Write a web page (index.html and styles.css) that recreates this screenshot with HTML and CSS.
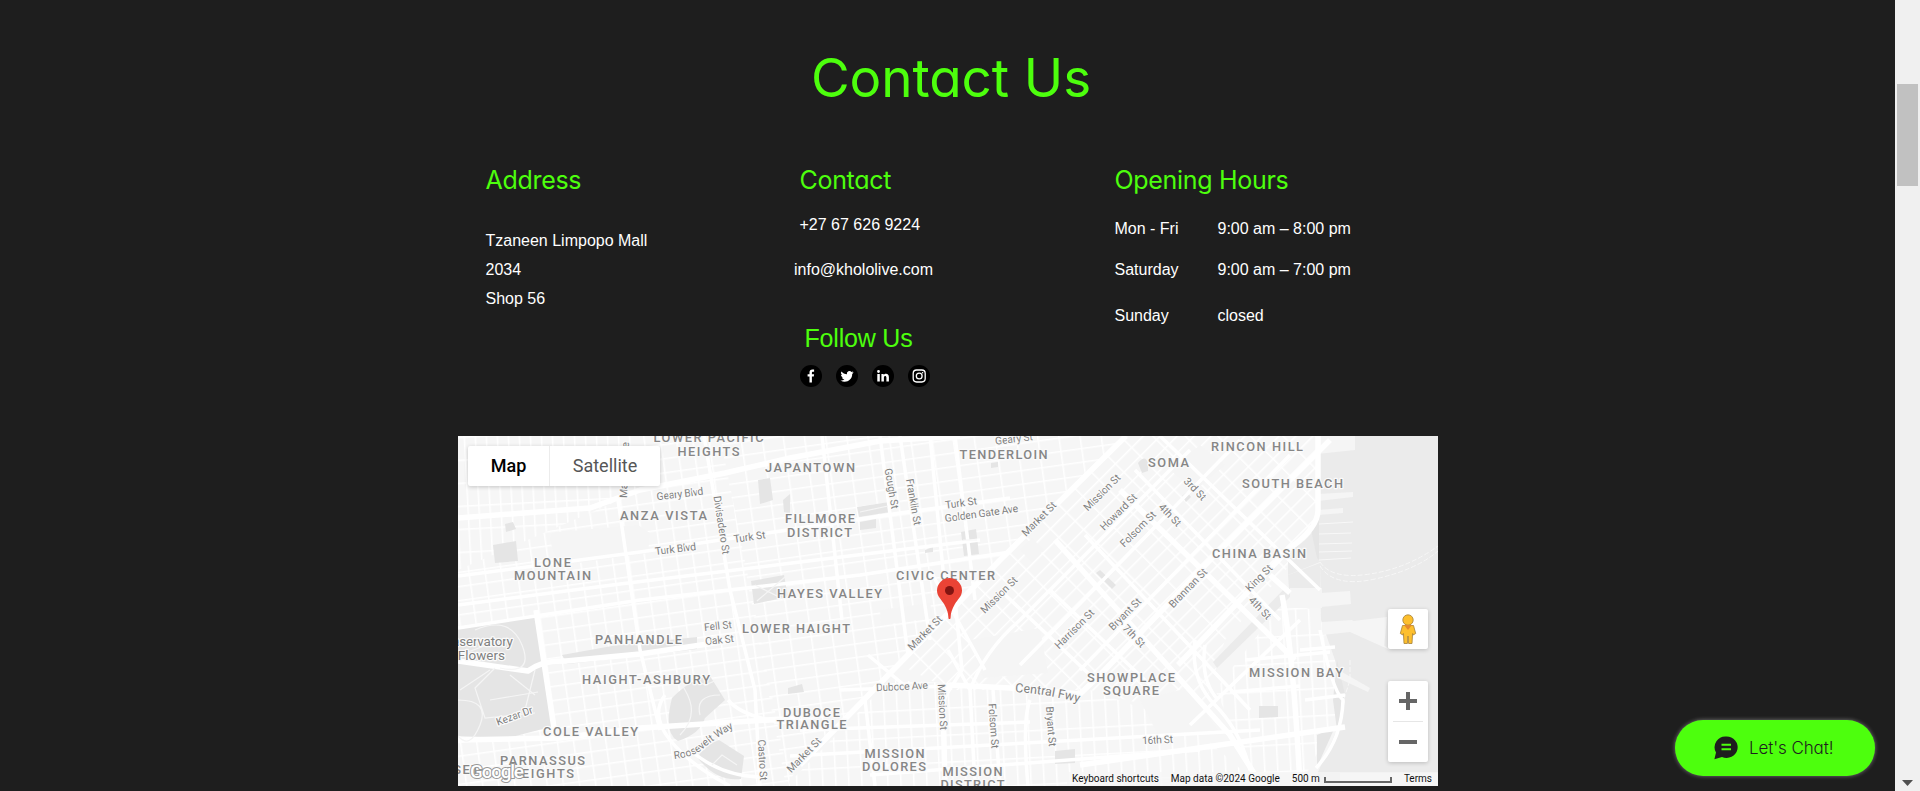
FILE: index.html
```html
<!DOCTYPE html>
<html lang="en">
<head>
<meta charset="utf-8">
<title>Contact Us</title>
<link rel="stylesheet" href="styles.css">
</head>
<body>
<main class="page">
  <h1 class="title">Contact Us</h1>
  <div class="columns">
    <section class="address">
      <h2>Address</h2>
      <p>Tzaneen Limpopo Mall<br>2034<br>Shop 56</p>
    </section>
    <section class="contact">
      <h2>Contact</h2>
      <p class="phone">+27 67 626 9224</p>
      <p class="email">info@khololive.com</p>
      <h3>Follow Us</h3>
      <div class="social">
        <svg viewBox="0 0 22 22"><circle cx="11" cy="11" r="11"/><path fill="#fff" d="M9.500 17.500v-6H7.600V9.200h1.900V7.600c0-2 1-3 2.900-3h1.700v2.200h-1.100c-.9 0-1.100.4-1.100 1.100v1.300h2.200l-.3 2.300h-1.900v6z"/></svg>
        <svg viewBox="0 0 22 22"><circle cx="11" cy="11" r="11"/><path fill="#fff" d="M17.600 7.200c-.5.200-1 .4-1.500.4.6-.3.900-.8 1.100-1.400-.5.300-1.100.5-1.700.7a2.700 2.700 0 0 0-4.600 2.400c-2.200-.1-4.200-1.200-5.500-2.800-.7 1.200-.4 2.800.8 3.600-.4 0-.8-.1-1.200-.3 0 1.300.9 2.400 2.100 2.700-.4.100-.8.100-1.200 0 .3 1.100 1.300 1.800 2.500 1.900-1.100.9-2.500 1.200-3.900 1.100 5.200 3.200 11.800-.2 11.700-6.500.6-.4 1-1 1.400-1.800z"/></svg>
        <svg viewBox="0 0 22 22"><circle cx="11" cy="11" r="11"/><path fill="#fff" d="M5.300 8.900h2.500v7.600H5.300zM6.500 5.100a1.400 1.400 0 1 1 0 2.800 1.400 1.400 0 0 1 0-2.800zM9.400 8.900h2.300v1c1.200-1.900 5.200-1.700 5.200 2v4.600h-2.500v-4c0-2.200-2.500-2-2.500 0v4H9.400z"/></svg>
        <svg viewBox="0 0 22 22"><circle cx="11" cy="11" r="11"/><g fill="none" stroke="#fff" stroke-width="1.300"><rect x="5.200" y="5" width="12" height="12" rx="3.400"/><circle cx="11.200" cy="11" r="2.900"/></g><circle cx="14.600" cy="7.700" r=".8" fill="#fff"/></svg>
      </div>
    </section>
    <section class="hours">
      <h2>Opening Hours</h2>
      <dl>
        <dt>Mon - Fri</dt><dd>9:00 am – 8:00 pm</dd>
        <dt>Saturday</dt><dd>9:00 am – 7:00 pm</dd>
        <dt class="last">Sunday</dt><dd class="last">closed</dd>
      </dl>
    </section>
  </div>

  <div class="map">
    <svg class="canvas" viewBox="458 436 980 350">
      <defs>
        <pattern id="west" width="16" height="14" patternUnits="userSpaceOnUse" patternTransform="rotate(-8)"><path class="grid" d="M0 0H16M0 0V14"/></pattern>
        <pattern id="north" width="11" height="23" patternUnits="userSpaceOnUse" patternTransform="rotate(-3)"><path class="grid" d="M0 0H11M0 0V23"/></pattern>
        <pattern id="mid" width="21" height="13.500" patternUnits="userSpaceOnUse" patternTransform="rotate(-8)"><path class="grid" d="M0 0H21M0 0V14"/></pattern>
        <pattern id="soma" width="23" height="12" patternUnits="userSpaceOnUse" patternTransform="rotate(-45)"><path class="grid" d="M0 0H23M0 0V12"/></pattern>
        <pattern id="mission" width="13" height="27" patternUnits="userSpaceOnUse" patternTransform="rotate(-3)"><path class="grid" d="M0 0H13M0 0V27"/></pattern>
        <path id="roosevelt" d="M674 759Q694 757 704 748T737 726"/>
        <path id="fwy" d="M1015 692Q1050 694 1084 704"/>
      </defs>
      <rect class="land" x="458" y="436" width="980" height="350"/>
      <path fill="url(#north)" d="M458 436H640L620 500 458 570z"/>
      <path fill="url(#west)" d="M458 570L620 500 640 436H720L790 786H458z"/>
      <path fill="url(#mid)" d="M720 436H1126L800 765 786 786z"/>
      <path fill="url(#soma)" d="M1126 436H1320V530L1225 640 1200 720 1090 690H950L900 665z"/>
      <path fill="url(#mission)" d="M786 786L890 680 1090 690 1190 725 1260 786z"/>
      <path fill="url(#mission)" d="M1215 690L1285 600 1325 615 1345 700 1300 786H1260z"/>

      <g class="faint">
        <path d="M550 540q0-8 8-8l80-7 12 8-2 20-90 13zM880 610l50-7 3 15-52 7zM1020 550l12-12 12 12-12 12zM1170 470l30-25 25 20-30 26zM1140 700l48-12 30 42-60 5zM970 640l70-12 8 45-65 5z"/>
      </g>
      <g class="park">
        <path d="M458 628l78-12 18 110-46 12-50-2zM562 655l50-9 85-9v12l-85 10-45 5zM751 581l33-6 4 22-34 7zM857 507l32-5 1 10-31 5zM860 522l16-3v9l-16 2zM961 532l15-3 3 25-15 2zM493 545l23-4 2 20-23 2zM505 524l8-2 3 7-10 3zM758 480l12-2 3 22-13 4zM783 500l7-6v20l-6-2zM991 463l7-1v5l-7 1zM1138 463q7-9 10 0v8l-6 2zM1182 496l5-4 4 5-5 5zM788 688l14-4 2 8-16 2zM1055 751l20-2v14l-20 1zM1259 706h19v11l-19 1zM1418 573h0zM1418 573h0zM1418 573h0zM1418 573h0zM1418 573h0zM1418 573h0zM1418 573h0zM1096 573l4-3 16 15-4 4zM925 550l8-3v5l-8 1z"/>
        <path d="M672 698q20-20 38-22l15 24-20 18q-5 16-27 23-15-8-6-43zM697 757q12-14 22-17l25 16-3 23q-25 3-44-22z"/>
      </g>
      <path class="water" d="M1319 436V515Q1318 535 1288 552V575L1320 562 1321 620 1335 660 1345 702 1336 732 1318 772V786H1438V436z"/>
      <path class="water" d="M1288 575l32-12v30l-31-4zM1213 662l73-75 6 8-75 73z"/>
      <g class="park"><path d="M1310 525l9-10v45l-2-2zM1337 660l8 35-8 35-4-30zM1317 735l18-8-18 40z"/></g>
      <g class="pier">
        <path d="M1318 436h37v14l-38 4zM1318 494l35-2v5l-35 4zM1318 510l25-2v5l-25 2zM1321 593l29-2 1 13-30 3zM1322 622l30-2 38 30-40-18-28 3zM1342 672l28 16-2 4-30-14zM1353 621l34-4-3 30-20-15zM1290 588h32v20h-32zM1340 773h100v13h-100z"/>
        <path class="slips" d="M1319 524l34-2M1319 534l32-1M1319 544l33-1M1319 552l33-1M1319 560l32-2"/>
      </g>
      <path class="ferry" d="M1320 562q12 18 50 12t68-28M1320 566q14 22 55 13t63-28M1350 660v20l-8 25"/>

      <g class="road thick">
        <path d="M458 518L590 508 640 490 725 473 790 458 880 441 960 436"/>
        <path d="M800 765L900 663 1000 560 1126 436"/>
        <path d="M945 786L943 700 950 685 1010 688 1080 694 1100 675 1210 560 1330 440"/>
        <path d="M1055 540L1230 735 1262 786M1318 436V510Q1318 528 1290 548L1178 665M1120 490L1295 660"/>
        <path d="M1282 595Q1293 650 1300 786M1270 575l20 18"/>
        <path d="M536 610L555 735M458 661L528 671Q542 660 566 661L640 654 735 640"/>
        <path d="M458 740L560 738 640 728 800 718M1080 765L1345 727"/>
      </g>
      <g class="road">
        <path d="M458 576L640 552 900 513 1010 498M458 605L620 584 800 562 980 540M618 500L640 650 660 730M704 436L730 590 755 690 760 786M458 628L640 600 860 575 1010 552"/>
        <path d="M822 436L842 620M900 436L930 640M880 436L908 655M930 436L944 580M955 436L975 600"/>
        <path d="M955 600L962 670 943 700M930 570L985 670M948 650L970 690M868 655L910 690M840 690L950 686M975 786L970 690Q985 650 1020 620L1190 450"/>
        <path d="M1050 590L1150 685M1000 590L1090 675M1085 535L1250 710M1135 470L1280 620M1160 436L1320 590M1020 665L1240 440M1080 670L1290 455"/>
        <path d="M865 700L875 786M993 690L1000 786M1030 700Q1022 720 1028 786M790 756L1260 730M800 730L1030 722M870 775L1200 750"/>
        <path d="M1190 725L1300 620M1195 640Q1190 680 1215 705T1250 770M1205 645Q1200 680 1218 700M1245 660L1330 652M1230 692L1300 686M1305 700l40-5M1300 650l35-3M1320 630Q1332 690 1343 700 1342 740 1316 768"/>
        <path d="M665 695Q650 715 670 740T730 786M728 700Q745 720 800 724M690 750Q720 776 760 777"/>
      </g>
      <g class="trail">
        <path d="M458 700Q490 700 480 725T458 736M475 630Q510 615 522 645T500 668M460 690l30-20M495 668l-20 20 10 30 50-5M500 640l-40 15M510 675l25 20M535 670l-10 40M490 700l48-8M680 735q20-20 5-45t20-5l12-5M700 715q-5-20 20-20M712 765l10-10 15 10"/>
        <path d="M755 585l28 14M785 577l-28 24M963 540h14M860 512l28-6"/>
      </g>

      <g class="street">
        <text transform="translate(680 494) rotate(-7)" textLength="47">Geary Blvd</text>
        <text transform="translate(675.500 549) rotate(-7)" textLength="41">Turk Blvd</text>
        <text transform="translate(721.500 525) rotate(81)" textLength="59">Divisadero St</text>
        <text transform="translate(749.500 537) rotate(-8)" textLength="32">Turk St</text>
        <text transform="translate(624.500 470) rotate(-88)" textLength="56">Masonic Ave</text>
        <text transform="translate(1014 439) rotate(-7)" textLength="38">Geary St</text>
        <text transform="translate(891.500 488.500) rotate(80)" textLength="41">Gough St</text>
        <text transform="translate(913.500 502) rotate(80)" textLength="47">Franklin St</text>
        <text transform="translate(961 503) rotate(-8)" textLength="32">Turk St</text>
        <text transform="translate(981.500 513.500) rotate(-8)" textLength="74">Golden Gate Ave</text>
        <text transform="translate(1039 519) rotate(-45)" textLength="44">Market St</text>
        <text transform="translate(1102 492.500) rotate(-45)" textLength="47">Mission St</text>
        <text transform="translate(1118.500 512) rotate(-45)" textLength="47">Howard St</text>
        <text transform="translate(1138 529) rotate(-45)" textLength="46">Folsom St</text>
        <text transform="translate(1195 489) rotate(46)" textLength="27">3rd St</text>
        <text transform="translate(1170 515) rotate(46)" textLength="27">4th St</text>
        <text transform="translate(1188 588) rotate(-46)" textLength="50">Brannan St</text>
        <text transform="translate(1259 578) rotate(-45)" textLength="33">King St</text>
        <text transform="translate(1260 608) rotate(46)" textLength="27">4th St</text>
        <text transform="translate(999 595) rotate(-45)" textLength="47">Mission St</text>
        <text transform="translate(925 633) rotate(-45)" textLength="44">Market St</text>
        <text transform="translate(1074.500 629) rotate(-45)" textLength="51">Harrison St</text>
        <text transform="translate(1125 614) rotate(-45)" textLength="41">Bryant St</text>
        <text transform="translate(1134 636) rotate(46)" textLength="27">7th St</text>
        <text transform="translate(718 626) rotate(-6)" textLength="28">Fell St</text>
        <text transform="translate(719.500 640) rotate(-6)" textLength="29">Oak St</text>
        <text transform="translate(514.500 716) rotate(-20)" textLength="38">Kezar Dr</text>
        <text transform="translate(762.500 760) rotate(87)" textLength="41">Castro St</text>
        <text transform="translate(902 686.500) rotate(-3)" textLength="52">Duboce Ave</text>
        <text transform="translate(942.500 707) rotate(87)" textLength="46">Mission St</text>
        <text transform="translate(993.500 726) rotate(86)" textLength="45">Folsom St</text>
        <text transform="translate(1051 726.500) rotate(86)" textLength="40">Bryant St</text>
        <text transform="translate(804 755) rotate(-46)" textLength="44">Market St</text>
        <text transform="translate(1157.500 740) rotate(-3)" textLength="31">16th St</text>
      </g>
      <text class="curved small"><textPath href="#roosevelt">Roosevelt Way</textPath></text>
      <text class="curved"><textPath href="#fwy">Central Fwy</textPath></text>

      <g class="area" transform="translate(0 -.5)">
        <text x="653.500" y="442.500" textLength="110">LOWER PACIFIC</text>
        <text x="677.500" y="456" textLength="62">HEIGHTS</text>
        <text x="620" y="520.700" textLength="87">ANZA VISTA</text>
        <text x="534" y="567" textLength="37">LONE</text>
        <text x="514" y="580" textLength="77">MOUNTAIN</text>
        <text x="765" y="472.700" textLength="90">JAPANTOWN</text>
        <text x="959.500" y="459" textLength="88">TENDERLOIN</text>
        <text x="785" y="523.700" textLength="70">FILLMORE</text>
        <text x="787" y="537" textLength="65">DISTRICT</text>
        <text x="896" y="580.700" textLength="99">CIVIC CENTER</text>
        <text x="777" y="598.700" textLength="105">HAYES VALLEY</text>
        <text x="1211" y="451" textLength="92">RINCON HILL</text>
        <text x="1148" y="467.300" textLength="41">SOMA</text>
        <text x="1242" y="488" textLength="101">SOUTH BEACH</text>
        <text x="1212" y="558" textLength="94">CHINA BASIN</text>
        <text x="595" y="644.700" textLength="87">PANHANDLE</text>
        <text x="742" y="633" textLength="108">LOWER HAIGHT</text>
        <text x="582" y="684.700" textLength="128">HAIGHT-ASHBURY</text>
        <text x="543" y="736.700" textLength="95">COLE VALLEY</text>
        <text x="500" y="765.700" textLength="85">PARNASSUS</text>
        <text x="511" y="778.700" textLength="63">HEIGHTS</text>
        <text x="424" y="774.700" textLength="55">SUNSET</text>
        <text x="783" y="717" textLength="57">DUBOCE</text>
        <text x="776.500" y="729.700" textLength="70">TRIANGLE</text>
        <text x="864.500" y="758.700" textLength="60">MISSION</text>
        <text x="862" y="771.700" textLength="64">DOLORES</text>
        <text x="942.500" y="776.500" textLength="60">MISSION</text>
        <text x="940.500" y="789.500" textLength="64">DISTRICT</text>
        <text x="1087" y="682.700" textLength="88">SHOWPLACE</text>
        <text x="1103" y="695.700" textLength="56">SQUARE</text>
        <text x="1249" y="677.700" textLength="94">MISSION BAY</text>
      </g>
      <g class="place"><text x="436" y="645.700" textLength="77">Conservatory</text><text x="442" y="660" textLength="63">of Flowers</text></g>
      <text class="logo" x="470" y="777.500" textLength="54">Google</text>
      <path fill="#ea4335" d="M949.500 578a12.500 12.500 0 0 0-12.500 12.500c0 6 4.500 8.800 7.200 13.800 2.800 5.200 4 8.200 4.200 13.200 0 1 .4 1.500 1.100 1.500s1.100-.5 1.100-1.500c.2-5 1.400-8 4.200-13.200 2.700-5 7.200-7.800 7.200-13.800a12.500 12.500 0 0 0-12.500-12.500z"/>
      <circle cx="949.500" cy="590.500" r="4.500" fill="#811411"/>
    </svg>
    <div class="types"><span class="on">Map</span><span>Satellite</span></div>
    <div class="tools">
      <div class="pegman">
        <svg width="18" height="30" viewBox="0 0 18 30"><g fill="#fdbf2d" stroke="#a4803a" stroke-width=".8"><path d="M3.500 11.500h11l2.200 8-2.500 1.500-.6-1.500-.6 10H9.600L9 22l-.6 7.500H5L4.400 19.500 3.800 21 1.300 19.500z"/><circle cx="9" cy="6" r="5.200"/></g><path fill="#e5892c" d="M5 11h8l-4 5z"/></svg>
      </div>
      <div class="zoom"><i class="plus"></i><i class="minus"></i></div>
    </div>
    <div class="credits"><span>Keyboard shortcuts</span><span>Map data ©2024 Google</span><span class="scale">500 m<i></i></span><span>Terms</span></div>
  </div>
</main>
<aside class="scrollbar"><div class="thumb"></div><svg width="11" height="6" viewBox="0 0 11 6"><path fill="#505050" d="M0 0h11L5.500 6z"/></svg></aside>
<div class="chat">
  <svg width="24" height="24" viewBox="0 0 24 24"><path fill="#1e1e1e" d="M12.500.5a11 10.700 0 1 1-4.500 20.400L.4 23.300 2 16.500A10.800 10.800 0 0 1 12.500.5z"/><path stroke="#4dff0d" stroke-width="2" d="M7.500 8.800h9.500M7.500 13.300h9.500"/></svg>
  <span>Let's Chat!</span>
</div>
</body>
</html>
```
FILE: styles.css
```css
* { box-sizing: border-box; }
body {
  margin: 0;
  height: 791px;
  overflow: hidden;
  display: flex;
  background: #1e1e1e;
  color: #fff;
  font: 16px/29px "Liberation Sans", Arial, sans-serif;
}
h1, h2, h3, p, dl, dd { margin: 0; font-weight: 400; }
h1, h2, h3 { color: #4dff0d; }
.page { width: 1895px; padding-left: 458px; }
.title {
  padding: 43px 0 0 353px;
  height: 160px;
  font: 400 53px/70px Inter, sans-serif;
  font-feature-settings: "cv11";
  letter-spacing: -.1px;
}
.columns {
  display: grid;
  grid-template-columns: 314px 315px 300px;
  padding-left: 27.5px;
  height: 276px;
}
h2 {
  height: 40px;
  font: 400 25px/41px Inter, sans-serif;
  font-feature-settings: "cv11";
  letter-spacing: -.3px;
}
.address p { padding-top: 26px; }
.phone { padding-top: 10px; }
.email { margin: 16px 0 0 -5.5px; }
h3 { margin: 39px 0 0 5px; font-size: 25px; line-height: 30px; letter-spacing: -.2px; }
.social { display: flex; gap: 14px; margin-top: 12px; padding-left: .5px; }
.social svg { width: 22px; height: 22px; }
.hours dl {
  display: grid;
  grid-template-columns: 103px 1fr;
  grid-template-rows: 41px 41px 46px;
  padding-top: 14px;
}
.last { padding-top: 5px; }

.map { position: relative; width: 980px; height: 350px; overflow: hidden; font-family: Roboto, sans-serif; }
.canvas { display: block; width: 980px; height: 350px; }
.land { fill: #f6f6f6; }
.grid { stroke: #fff; stroke-width: 3; fill: none; }
.faint { fill: #f5f5f5; }
.park { fill: #e5e5e5; }
.water { fill: #ebebeb; }
.pier { fill: #f5f5f5; }
.slips { stroke: #f8f8f8; stroke-width: 1; }
.ferry { fill: none; stroke: #f7f7f7; stroke-dasharray: 5 2; }
.road { fill: none; stroke: #fff; stroke-width: 3.5; stroke-linejoin: round; }
.road.thick { stroke-width: 5.5; }
.trail { fill: none; stroke: #f5f5f5; stroke-width: 1.2; }
.area, .street, .curved, .place { fill: #808080; stroke: #fafafa; stroke-width: 2.5px; paint-order: stroke; stroke-linejoin: round; }
.area { font-size: 12.8px; font-weight: 500; fill: #868686; }
.street { font-size: 10.5px; text-anchor: middle; dominant-baseline: central; }
.curved { font-size: 12.5px; }
.curved.small { font-size: 10.5px; }
.place { font-size: 13.5px; }
.logo { font-size: 19px; font-weight: 500; fill: #fff; stroke: #999; stroke-width: 2px; paint-order: stroke; }

.types {
  position: absolute;
  left: 10px;
  top: 10px;
  display: flex;
  height: 40px;
  background: #fff;
  border-radius: 2px;
  box-shadow: 0 1px 4px rgba(0, 0, 0, .2);
  font-size: 18px;
  line-height: 40px;
  color: #565656;
}
.types span { width: 110px; text-align: center; }
.types .on { width: 82px; color: #000; font-weight: 500; border-right: 1px solid #ececec; }
.tools { position: absolute; right: 10px; top: 173px; width: 40px; display: grid; gap: 32px; }
.pegman, .zoom { background: #fff; border-radius: 2px; box-shadow: 0 1px 4px rgba(0, 0, 0, .2); }
.pegman { height: 40px; display: grid; place-items: center; }
.zoom { height: 81px; display: grid; grid-template-rows: 40px 41px; place-items: center; background: linear-gradient(#e6e6e6, #e6e6e6) 5px 40px / 30px 1px no-repeat #fff; }
.plus, .minus { width: 18px; height: 18px; background: linear-gradient(#666, #666) center / 18px 4px no-repeat; }
.plus { background: linear-gradient(#666, #666) center / 18px 4px no-repeat, linear-gradient(#666, #666) center / 4px 18px no-repeat; }
.credits {
  position: absolute;
  right: 0;
  bottom: 0;
  height: 14px;
  display: flex;
  gap: 12px;
  padding: 0 6px 0 5px;
  background: rgba(245, 245, 245, .75);
  color: #111;
  font-size: 10px;
  line-height: 14px;
  white-space: nowrap;
}
.scale { display: flex; gap: 4px; }
.scale i { width: 68px; height: 6px; margin-top: 5px; border: 2px solid #666; border-width: 0 2px 2px; }

.scrollbar {
  width: 25px;
  display: flex;
  flex-direction: column;
  justify-content: space-between;
  align-items: center;
  padding: 84px 0 5px;
  background: #f0f0f0;
}
.thumb { width: 21px; height: 102px; background: #c1c1c1; }
.chat {
  position: absolute;
  left: 1675px;
  top: 720px;
  width: 200px;
  height: 56px;
  display: flex;
  align-items: center;
  gap: 11px;
  padding-left: 39px;
  border-radius: 28px;
  background: #4dff0d;
  box-shadow: 0 0 4px rgba(255, 255, 255, .4);
  color: #1e1e1e;
  font: 300 17px/24px Inter, sans-serif;
  font-feature-settings: "cv11";
  letter-spacing: -.1px;
  white-space: nowrap;
}
```
